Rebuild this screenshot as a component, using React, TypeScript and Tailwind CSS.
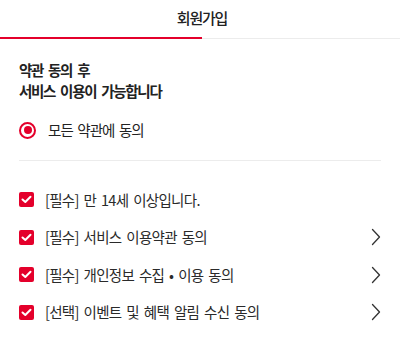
import React from "react";

const font = { fontFamily: '"Noto Sans CJK KR", "Noto Sans", sans-serif' };

function Check() {
  return (
    <span className="flex h-[15px] w-[15px] shrink-0 items-center justify-center rounded-[2px] bg-[#e4002b]">
      <svg width="11" height="9" viewBox="0 0 11 9" fill="none">
        <path d="M1.5 4.5 L4.3 7 L9.5 1.8" stroke="#fff" strokeWidth="2" strokeLinecap="round" strokeLinejoin="round" />
      </svg>
    </span>
  );
}

function Chevron() {
  return (
    <svg width="10" height="18" viewBox="0 0 10 18" fill="none" className="shrink-0">
      <path d="M1.5 1.5 L8.5 9 L1.5 16.5" stroke="#333" strokeWidth="1.3" strokeLinecap="round" strokeLinejoin="round" />
    </svg>
  );
}

const items = [
  { text: "[필수] 만 14세 이상입니다.", arrow: false },
  { text: "[필수] 서비스 이용약관 동의", arrow: true },
  { text: "[필수] 개인정보 수집 • 이용 동의", arrow: true },
  { text: "[선택] 이벤트 및 혜택 알림 수신 동의", arrow: true },
];

export default function App() {
  return (
    <div className="h-[358px] w-[400px] bg-white text-[#222]" style={font}>
      <div className="flex h-[37px] items-center justify-center pl-[4px] text-[15px] font-medium tracking-[-1.2px] text-[#222]">
        회원가입
      </div>
      <div className="flex h-[2px]">
        <div className="w-[202px] bg-[#e4002b]" />
        <div className="mt-[1px] h-[1px] flex-1 bg-[#ececec]" />
      </div>
      <div className="px-[19px]">
        <div className="pt-[20px] text-[14.5px] font-bold leading-[21px] tracking-[-1.3px] [word-spacing:3px] text-[#222]">
          <div>약관 동의 후</div>
          <div>서비스 이용이 가능합니다</div>
        </div>
        <div className="mt-[17px] flex h-[24px] items-center gap-[12px]">
          <span className="flex h-[17px] w-[17px] items-center justify-center rounded-full border-[2px] border-[#e4002b]">
            <span className="h-[8px] w-[8px] rounded-full bg-[#e4002b]" />
          </span>
          <span className="text-[14.5px] tracking-[-0.9px] [word-spacing:2px] text-[#222]">모든 약관에 동의</span>
        </div>
        <div className="mt-[18px] h-[1px] bg-[#ececec]" />
        <div className="mt-[20px] flex flex-col">
          {items.map((it) => (
            <div key={it.text} className="flex h-[37.5px] items-center gap-[11px]">
              <Check />
              <span className="flex-1 text-[14.5px] tracking-[-0.7px] [word-spacing:2.3px] text-[#2a2a2a]">{it.text}</span>
              {it.arrow && <Chevron />}
            </div>
          ))}
        </div>
      </div>
    </div>
  );
}
